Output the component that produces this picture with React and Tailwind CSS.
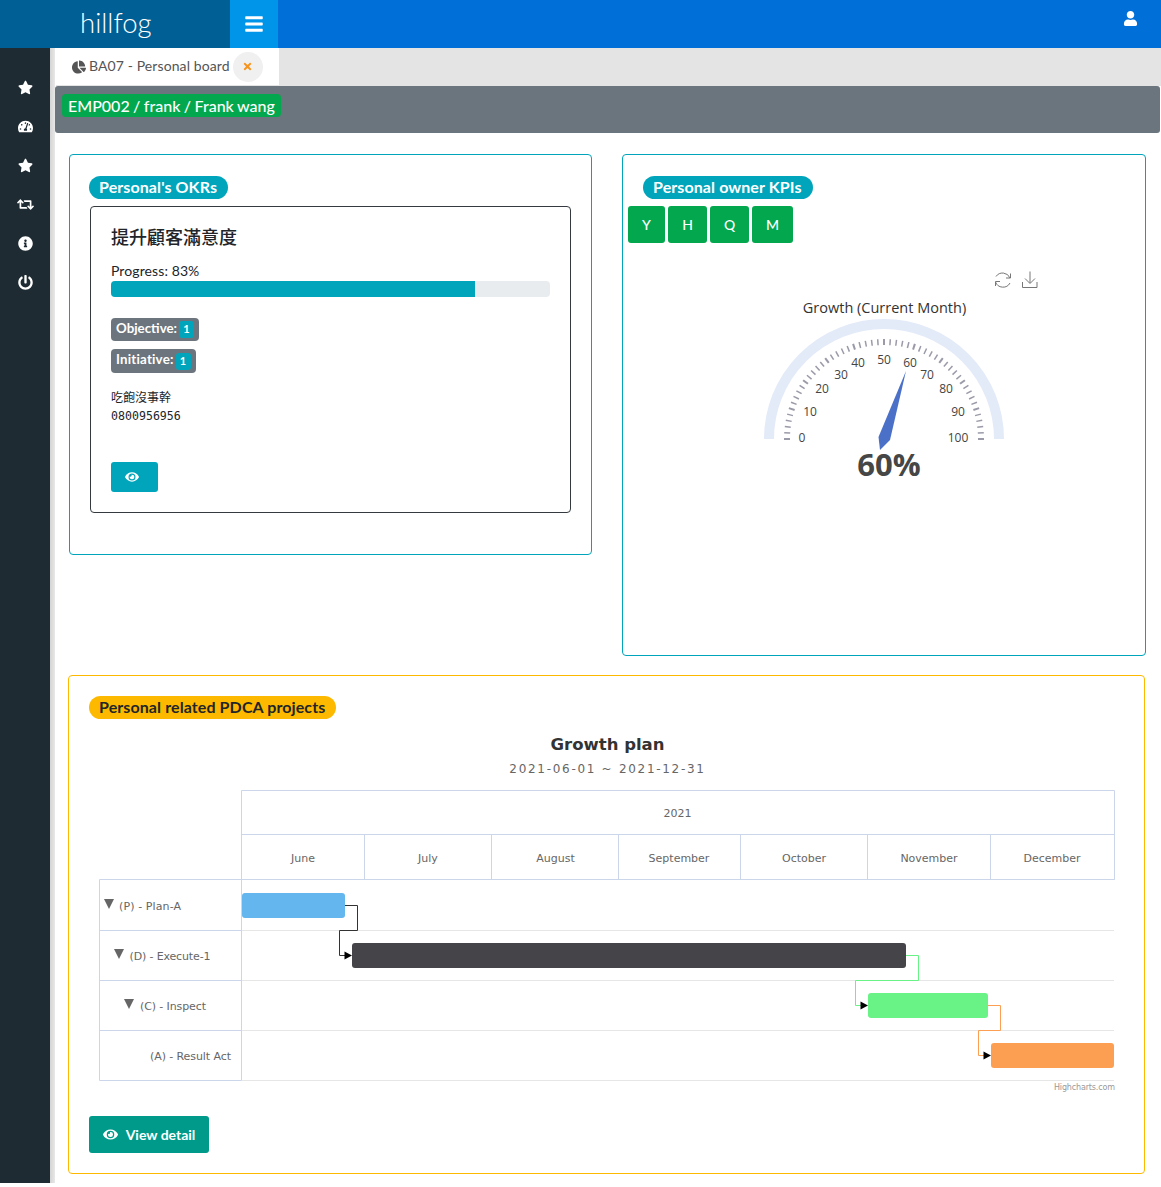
import { FaBars, FaChartPie, FaEye, FaInfoCircle, FaPowerOff, FaRetweet, FaStar, FaTachometerAlt, FaTimes, FaUser } from 'react-icons/fa'

const SIDE_ICONS = [FaStar, FaTachometerAlt, FaStar, FaRetweet, FaInfoCircle, FaPowerOff]

const GAUGE_LABELS = [
  ['0', 802, 437], ['10', 810, 411], ['20', 822, 388], ['30', 841, 374], ['40', 858, 362.5], ['50', 884, 359],
  ['60', 910, 362.5], ['70', 927, 374], ['80', 946, 388], ['90', 958, 411], ['100', 958, 437],
]

const MONTHS = [['June', 303], ['July', 428], ['August', 555.5], ['September', 679], ['October', 804], ['November', 929], ['December', 1052]]
const MONTH_LINES = [364.5, 491.5, 618.5, 740.5, 867.5, 990.5, 1114.5]

const ROWS = [
  { label: '(P) - Plan-A', x: 119, width: 62, y: 910, arrow: 104, arrowY: 899 },
  { label: '(D) - Execute-1', x: 129.5, width: 81, y: 960, arrow: 114, arrowY: 949 },
  { label: '(C) - Inspect', x: 140, width: 66, y: 1010, arrow: 124, arrowY: 999 },
  { label: '(A) - Result Act', x: 150, width: 81, y: 1060 },
]

const BARS = [
  { x: 242, y: 893, w: 103, fill: '#64b6ee' },
  { x: 352, y: 943, w: 554, fill: '#444449' },
  { x: 868, y: 993, w: 120, fill: '#69f285' },
  { x: 991, y: 1043, w: 123, fill: '#fd9f53' },
]

const LINKS = [
  { d: 'M345 905.5H357.5V930.5H339.5V955.5H346', stroke: '#333333', tip: 352, y: 955.5 },
  { d: 'M906 955.5H918.5V980.5H855.5V1005.5H862', stroke: '#69f285', tip: 868, y: 1005.5 },
  { d: 'M988 1005.5H1000.5V1030.5H978.5V1055.5H985', stroke: '#fd9f53', tip: 991, y: 1055.5 },
]

function Pill({ color, children, className = '' }) {
  return (
    <div className={`flex h-[23px] w-fit items-center rounded-full pb-[2px] pl-[10px] pr-[11px] font-['Lato',sans-serif] text-[16px] font-bold tracking-[0.1px] text-white ${color} ${className}`}>
      {children}
    </div>
  )
}

function CountBadge({ label, className }) {
  return (
    <div className={`flex w-fit items-center gap-[2px] rounded-[4px] bg-[#6c757d] px-[5px] text-[13.3px] font-bold text-white ${className}`}>
      <span className="-mt-[2px]">{label}</span>
      <span className="flex h-[17px] w-[15px] items-center justify-center rounded-[3px] bg-[#00a5bb] text-[11px]">1</span>
    </div>
  )
}

function Gauge() {
  const ticks = []
  for (let i = 0; i <= 50; i++) {
    const a = Math.PI - (i / 50) * Math.PI
    const major = i % 5 === 0
    ticks.push(
      <line
        key={i}
        x1={884 + 100 * Math.cos(a)}
        y1={439 - 100 * Math.sin(a)}
        x2={884 + 94 * Math.cos(a)}
        y2={439 - 94 * Math.sin(a)}
        stroke="#9a9aa8"
        strokeWidth={major ? 2 : 1.5}
      />
    )
  }
  return (
    <svg width="510" height="230" viewBox="628 262 510 230" className="block">
      <g fill="none" stroke="#777777" strokeWidth="1">
        <path d="M996 276.5a8 8 0 0 1 14 1.5M1010 283a8 8 0 0 1-14.5-1" />
        <path d="M1010.5 273.5v4.5h-4.5M995.5 286v-4.5h4.5" />
        <path d="M1030 271.5v11.5M1025 278.5l5 5 5-5M1022.5 282v5.5h14.500v-5.500" />
      </g>
      <text x="884.500" y="313" textAnchor="middle" fontFamily="'Open Sans', sans-serif" fontSize="14.500" fill="#333333">Growth (Current Month)</text>
      <path d="M769 439a115 115 0 0 1 230 0" fill="none" stroke="#e3eaf8" strokeWidth="10" />
      {ticks}
      {GAUGE_LABELS.map(([t, x, y]) => (
        <text key={t} x={x} y={y + 4.5} textAnchor="middle" fontFamily="'Open Sans', sans-serif" fontSize="12" fill="#444444">{t}</text>
      ))}
      <polygon points="906,371 878.500,437 880,450 890,440" fill="#4a70c8" />
      <text x="889" y="476" textAnchor="middle" fontFamily="'Open Sans', sans-serif" fontWeight="700" fontSize="31" fill="#464646">60%</text>
    </svg>
  )
}

function GanttChart() {
  const font = "'DejaVu Sans', sans-serif"
  return (
    <svg width="1036" height="370" viewBox="89 730 1036 370" className="block">
      <text x="607.500" y="750" textAnchor="middle" fontFamily={font} fontSize="16.500" fontWeight="700" fill="#333333">Growth plan</text>
      <text x="607.500" y="773" textAnchor="middle" fontFamily={font} fontSize="12" letterSpacing="1.7" fill="#666666">2021-06-01 ~ 2021-12-31</text>

      <g stroke="#e6e6e6">
        {[930.5, 980.5, 1030.5, 1080.5].map((y) => <line key={y} x1="242" x2="1114" y1={y} y2={y} />)}
      </g>
      <g stroke="#ccd6eb" fill="none">
        <path d="M241.500 1080.500V790.500H1114.500V879.500H99.500V1080.500H241.500" />
        <line x1="241.500" x2="1114.500" y1="834.500" y2="834.500" />
        {MONTH_LINES.map((x) => <line key={x} x1={x} x2={x} y1="834.500" y2="879.500" />)}
        {[930.5, 980.5, 1030.5].map((y) => <line key={y} x1="99.500" x2="241.500" y1={y} y2={y} />)}
      </g>

      <text x="677.500" y="817" textAnchor="middle" fontFamily={font} fontSize="11" fill="#666666">2021</text>
      {MONTHS.map(([m, x]) => (
        <text key={m} x={x} y="862" textAnchor="middle" fontFamily={font} fontSize="11" fill="#666666">{m}</text>
      ))}

      {ROWS.map((r) => (
        <g key={r.label}>
          {r.arrow && <polygon points={`${r.arrow},${r.arrowY} ${r.arrow + 10},${r.arrowY} ${r.arrow + 5},${r.arrowY + 10}`} fill="#666666" />}
          <text x={r.x} y={r.y} textLength={r.width} fontFamily={font} fontSize="11" fill="#666666">{r.label}</text>
        </g>
      ))}

      {LINKS.map((l) => (
        <g key={l.d}>
          <path d={l.d} fill="none" stroke={l.stroke} />
          <polygon points={`${l.tip - 7.5},${l.y - 4} ${l.tip},${l.y} ${l.tip - 7.5},${l.y + 4}`} fill="#000000" />
        </g>
      ))}
      {BARS.map((b) => (
        <rect key={b.x} x={b.x} y={b.y} width={b.w} height="25" rx="3" fill={b.fill} />
      ))}

      <text x="1115" y="1090" textAnchor="end" fontFamily={font} fontSize="8" textLength="61" fill="#999999">Highcharts.com</text>
    </svg>
  )
}

export default function App() {
  return (
    <div className="flex h-[1183px] flex-col bg-white font-['Lato',sans-serif] text-[#212529]">
      <header className="flex h-12 shrink-0 bg-[#006fd8] text-white">
        <div className="flex w-[230px] items-center bg-[#005f95] pb-[2px] pl-[80px] text-[27.5px] font-light">hillfog</div>
        <button type="button" className="flex w-12 items-center justify-center bg-[#0095e8]">
          <FaBars size={20} />
        </button>
        <div className="flex flex-1 items-start justify-end pr-[23px] pt-[11px]">
          <FaUser size={15} />
        </div>
      </header>

      <div className="flex min-h-0 flex-1">
        <aside className="flex w-[50px] shrink-0 flex-col items-center bg-[#1e2b33] pt-5 text-white">
          {SIDE_ICONS.map((Icon, i) => (
            <div key={i} className="flex h-[39px] items-center justify-center">
              <Icon size={i === 3 ? 17 : 15} />
            </div>
          ))}
        </aside>
        <div className="w-[5px] shrink-0 bg-gradient-to-r from-[#d4d4d4] to-[#e8e8e8]" />

        <main className="min-w-0 flex-1">
          <div className="ml-px flex h-[38px] bg-[#e4e4e4]">
            <div className="flex h-[37px] w-[223px] items-center bg-white pl-4 text-[14px] tracking-[0.1px] text-[#555555]">
              <FaChartPie size={14} className="mr-[3px] text-[#555555]" />
              <span className="-mt-[2px]">BA07 - Personal board</span>
              <span className="ml-[3px] flex h-[30px] w-[30px] items-center justify-center rounded-full bg-[#f0f0f0]">
                <FaTimes size={11} className="text-[#f7941d]" />
              </span>
            </div>
          </div>

          <div className="mr-px h-[47px] rounded-[3px] bg-[#6a757d] pl-[7px] pt-2">
            <div className="flex h-[23px] w-fit items-center rounded-[4px] bg-[#03a84e] px-[6px] text-[16px] font-medium text-white [word-spacing:-0.6px]">
              EMP002 / frank / Frank wang
            </div>
          </div>

          <div className="pl-[14px] pt-[21px]">
            <div className="grid grid-cols-[523px_524px] items-start gap-x-[30px]">
              <section className="h-[401px] rounded-[4px] border border-[#00a5bb] px-5 pt-[21px]">
                <Pill color="bg-[#00a5bb]" className="-ml-px">Personal's OKRs</Pill>
                <div className="mt-[7px] h-[307px] w-[481px] rounded-[4px] border border-[#343a40] px-5 pt-4">
                  <h3 className="font-['Noto_Sans_CJK_TC',sans-serif] text-[18px] font-medium leading-[26px]">提升顧客滿意度</h3>
                  <p className="mt-[13px] text-[14px] leading-[18px] tracking-[0.1px]">Progress: 83%</p>
                  <div className="mt-px h-4 w-[439px] overflow-hidden rounded-[4px] bg-[#e9ecef]">
                    <div className="h-full w-[83%] bg-[#00a5bb]" />
                  </div>
                  <div className="mt-[21px] flex flex-col gap-2">
                    <CountBadge label="Objective:" className="h-[23px]" />
                    <CountBadge label="Initiative:" className="h-[24px] tracking-[0.2px]" />
                  </div>
                  <p className="mt-[15px] font-['Noto_Sans_CJK_TC',sans-serif] text-[12px] leading-[18px]">吃飽沒事幹</p>
                  <p className="mt-px font-['DejaVu_Sans_Mono',monospace] text-[11.6px] leading-[18px]">0800956956</p>
                  <button type="button" className="mt-[37px] flex h-[30px] w-[47px] items-center justify-center rounded-[3px] bg-[#00a5bb] pr-[6px] text-white">
                    <FaEye size={14} />
                  </button>
                </div>
              </section>

              <section className="h-[502px] rounded-[4px] border border-[#00a5bb] pl-[5px] pt-[21px]">
                <Pill color="bg-[#00a5bb]" className="ml-[15px]">Personal owner KPIs</Pill>
                <div className="mt-[7px] flex gap-[3px] text-[14px] font-medium text-white">
                  <button type="button" className="h-[37px] w-[37px] rounded-[3px] bg-[#03a84e]">Y</button>
                  <button type="button" className="h-[37px] w-[39px] rounded-[3px] bg-[#03a84e]">H</button>
                  <button type="button" className="h-[37px] w-[39px] rounded-[3px] bg-[#03a84e]">Q</button>
                  <button type="button" className="h-[37px] w-[41px] rounded-[3px] bg-[#03a84e]">M</button>
                </div>
                <div className="mt-[19px]">
                  <Gauge />
                </div>
              </section>
            </div>

            <section className="-ml-px mt-[19px] h-[499px] w-[1077px] rounded-[4px] border border-[#fdb900] pl-5 pt-[20px]">
              <Pill color="bg-[#fdb900]" className="!text-[#212529]">Personal related PDCA projects</Pill>
              <div className="mt-[11px]">
                <GanttChart />
              </div>
              <button type="button" className="mt-4 flex h-[37px] w-[120px] items-center justify-center gap-2 rounded-[3px] bg-[#009a8a] text-[14px] font-bold text-white">
                <FaEye size={15} />
                View detail
              </button>
            </section>
          </div>
        </main>
      </div>
    </div>
  )
}
